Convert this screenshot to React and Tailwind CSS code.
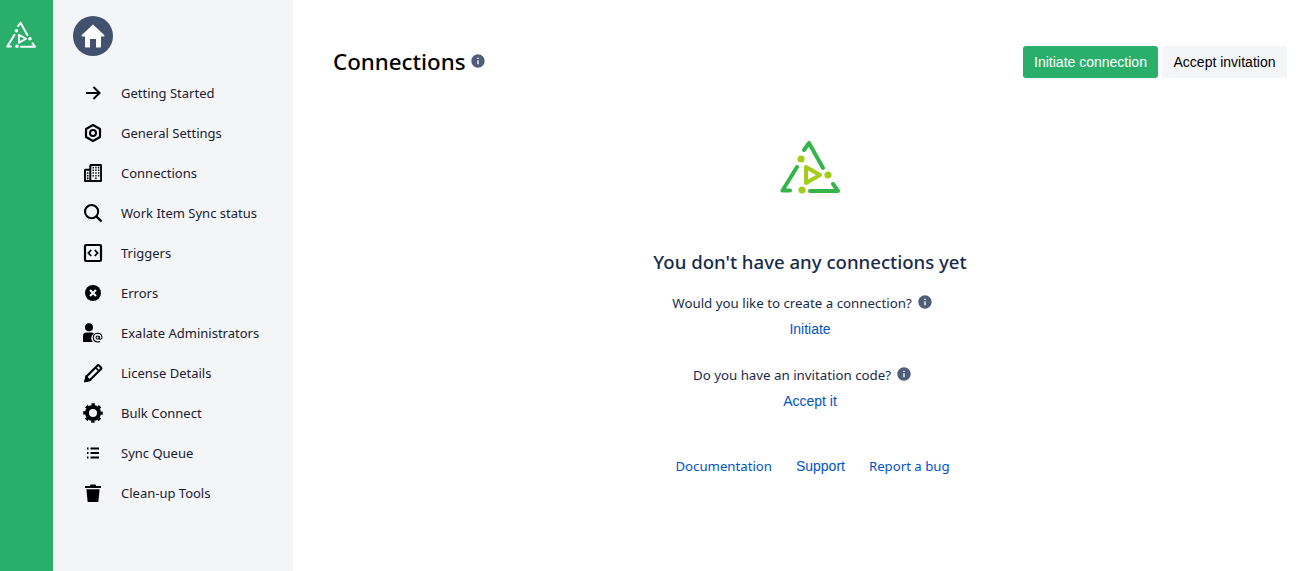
import { BiSolidInfoCircle } from "react-icons/bi";

const uiFont = "font-['Noto_Sans','Open_Sans',sans-serif]";
const linkFont = "font-['Liberation_Sans',Arial,sans-serif]";

// Exalate mark: dashed triangle with a play glyph inside
const Logo = ({ outer, inner, className }) => (
  <svg viewBox="0 0 60 55" fill="none" className={className}>
    <g stroke={outer} strokeWidth="4" strokeLinecap="round" strokeLinejoin="round">
      <path d="M24 10 L29 3 L43 28" />
      <path d="M17 27 L2.5 50.5 L10 50.5" />
      <path d="M30 51 L58 51 L53 44" />
    </g>
    <path d="M26 27 L40 35 L26 43 Z" stroke={inner} strokeWidth="4" strokeLinejoin="round" />
    <circle cx="21" cy="19" r="3.6" fill={inner} />
    <circle cx="48" cy="35" r="3.6" fill={inner} />
    <circle cx="22" cy="50" r="3.6" fill={inner} />
  </svg>
);

const Icon = ({ children, size = "w-5 h-5", ...rest }) => (
  <svg viewBox="0 0 20 20" className={size} fill="none" stroke="currentColor" {...rest}>
    {children}
  </svg>
);

const ArrowIcon = () => (
  <Icon>
    <path d="M3 10 H16 M10.5 4 L16.5 10 L10.5 16" strokeWidth="2" />
  </Icon>
);

const HexNut = () => (
  <Icon>
    <path d="M10 2 L17 6 V14 L10 18 L3 14 V6 Z" strokeWidth="2.2" strokeLinejoin="round" />
    <circle cx="10" cy="10" r="3" strokeWidth="2" />
  </Icon>
);

const BuildingsIcon = () => (
  <Icon size="w-[18px] h-[18px]">
    <path d="M7 18.5 V2 Q7 1 8 1 H18 Q19 1 19 2 V18 Q19 19 18 19 H2 Q1 19 1 18 V7.5 Q1 6.5 2 6.5 H7" strokeWidth="2.2" />
    <path d="M9.5 4 H11 M12.5 4 H14 M15.5 4 H17 M9.5 7 H11 M12.5 7 H14 M15.5 7 H17 M9.5 10 H11 M12.5 10 H14 M15.5 10 H17 M9.5 13 H11 M12.5 13 H14 M15.5 13 H17 M12.5 16 H14 M3.2 10 H5 M3.2 13 H5 M3.2 16 H5" strokeWidth="1.8" />
  </Icon>
);

const SearchIcon = () => (
  <Icon>
    <circle cx="8.6" cy="8.6" r="6.6" strokeWidth="2.1" />
    <path d="M13.4 13.4 L18.5 18.5" strokeWidth="2.3" />
  </Icon>
);

const CodeIcon = () => (
  <Icon>
    <rect x="2" y="2" width="16" height="16" rx="1" strokeWidth="2.2" />
    <path d="M8.2 7 L5.4 10 L8.2 13 M11.8 7 L14.6 10 L11.8 13" strokeWidth="1.8" />
  </Icon>
);

const ErrorIcon = () => (
  <Icon>
    <circle cx="10" cy="10" r="8" fill="currentColor" stroke="none" />
    <path d="M7 7 L13 13 M13 7 L7 13" stroke="#f4f5f7" strokeWidth="2.2" />
  </Icon>
);

const AdminIcon = () => (
  <Icon>
    <circle cx="6" cy="4.3" r="4" fill="currentColor" stroke="none" />
    <path d="M0 19 V13 Q0 9.6 3.5 9.6 H8 Q10 9.6 11 10.4 Q8.2 12 8.2 15 Q8.2 17.5 9.8 19 Z" fill="currentColor" stroke="none" />
    <circle cx="14.6" cy="14.6" r="1.6" strokeWidth="1.1" />
    <path d="M16.2 13 V15.2 Q16.3 16.4 17.5 16.2 Q19 15.8 19 14.2 Q18.8 10.4 14.7 10.2 Q10.4 10.4 10.3 14.6 Q10.5 18.8 14.7 19 Q16 19 17 18.5" strokeWidth="1.1" />
  </Icon>
);

const PencilIcon = () => (
  <Icon>
    <path d="M14.5 2.5 Q15.3 1.8 16 2.5 L18 4.5 Q18.7 5.2 18 6 L7 17 L2.5 18 L3.5 13.5 Z" strokeWidth="2.1" strokeLinejoin="round" />
    <path d="M12.5 4.5 L16 8 M2 18.5 L3.2 13.6 L6.8 17.3 Z" strokeWidth="1.6" fill="currentColor" />
  </Icon>
);

const GearIcon = () => (
  <Icon>
    <circle cx="10" cy="10" r="6" strokeWidth="4" />
    <circle cx="10" cy="10" r="8.6" strokeWidth="2.4" strokeDasharray="3.4 3.35" strokeDashoffset="1.7" />
  </Icon>
);

const ListIcon = () => (
  <Icon>
    <path d="M7.5 5.5 H16 M7.5 10 H16 M7.5 14.5 H16" strokeWidth="2" />
    <path d="M4 5.5 H5.5 M4 10 H5.5 M4 14.5 H5.5" strokeWidth="2.2" />
  </Icon>
);

const TrashIcon = () => (
  <Icon fill="currentColor" stroke="none">
    <path d="M7.5 1.5 H12.5 L13.2 3 H18 V5 H2 V3 H6.8 Z" />
    <path d="M3.4 6.2 H16.6 L15.4 18.4 Q15.3 19 14.6 19 H5.4 Q4.7 19 4.6 18.4 Z" />
  </Icon>
);

const NAV_ITEMS = [
  { label: "Getting Started", icon: <ArrowIcon /> },
  { label: "General Settings", icon: <HexNut /> },
  { label: "Connections", icon: <BuildingsIcon /> },
  { label: "Work Item Sync status", icon: <SearchIcon /> },
  { label: "Triggers", icon: <CodeIcon /> },
  { label: "Errors", icon: <ErrorIcon /> },
  { label: "Exalate Administrators", icon: <AdminIcon /> },
  { label: "License Details", icon: <PencilIcon /> },
  { label: "Bulk Connect", icon: <GearIcon /> },
  { label: "Sync Queue", icon: <ListIcon /> },
  { label: "Clean-up Tools", icon: <TrashIcon /> },
];

const Info = ({ className = "" }) => (
  <BiSolidInfoCircle className={`w-4 h-4 text-[#505f79] ${className}`} />
);

const Sidebar = () => (
  <aside className="w-[240px] shrink-0 bg-[#f4f5f7] pt-4 pl-5">
    <div className="w-10 h-10 rounded-full bg-[#42526e] flex items-center justify-center">
      <svg viewBox="0 0 24 24" className="w-6 h-6" fill="#fff">
        <path d="M12 0.5 L23.2 11 Q24 12.5 22.5 12.5 H20 V22.5 Q20 23.5 19 23.5 H15 V15 H9 V23.5 H5 Q4 23.5 4 22.5 V12.5 H1.5 Q0 12.5 0.8 11 Z" />
      </svg>
    </div>
    <nav className="mt-[17px]">
      {NAV_ITEMS.map((item) => (
        <a key={item.label} className="flex items-center h-10 text-[13px] text-[#172033]">
          <span className="w-10 flex items-center justify-center text-black">{item.icon}</span>
          <span className="ml-2 pt-[2px]">{item.label}</span>
        </a>
      ))}
    </nav>
  </aside>
);

const App = () => (
  <div className={`flex h-[571px] overflow-hidden bg-white ${uiFont}`}>
    <div className="w-[53px] shrink-0 bg-[#2aaf6a] pt-[21px] pl-[6px]">
      <Logo outer="#fff" inner="#fff" className="w-[30px] h-[28px]" />
    </div>
    <Sidebar />

    <main className="flex-1 pl-10 pr-[23px] pt-[46px]">
      <div className="flex items-start justify-between">
        <div className="flex items-center h-8">
          <h1 className="text-[22.3px] font-medium text-black leading-8 -mt-[1px]">Connections</h1>
          <Info className="ml-[4px] -mt-[2px]" />
        </div>
        <div className={`flex gap-1 text-[14px] ${linkFont}`}>
          <button className="h-8 w-[135px] rounded-[3px] bg-[#2aaf6a] text-white">Initiate connection</button>
          <button className="h-8 w-[125px] rounded-[3px] bg-[#f4f5f7] text-black">Accept invitation</button>
        </div>
      </div>

      <section className="flex flex-col items-center mt-[62px]">
        <Logo outer="#36b449" inner="#a4cd1b" className="w-[60px] h-[55px]" />
        <h2 className="mt-[53px] text-[18.6px] font-medium leading-7 text-[#172b4d]">You don't have any connections yet</h2>

        <div className="mt-[18px] pr-[15px] flex items-center h-5 text-[13.3px] text-[#172b4d]">
          <span>Would you like to create a connection?</span>
          <Info className="ml-[5px] -mt-[4px]" />
        </div>
        <a className={`mt-[5px] text-[14px] leading-5 text-[#0052cc] ${linkFont}`}>Initiate</a>

        <div className="mt-[27px] pr-[15px] flex items-center h-5 text-[13.3px] text-[#172b4d]">
          <span>Do you have an invitation code?</span>
          <Info className="ml-[5px] -mt-[4px]" />
        </div>
        <a className={`mt-[5px] text-[14px] leading-5 text-[#0052cc] ${linkFont}`}>Accept it</a>

        <div className="mt-[45px] ml-[5px] flex gap-6 text-[13.2px] leading-5 text-[#0052cc]">
          <a>Documentation</a>
          <a className={`text-[14px] ${linkFont}`}>Support</a>
          <a>Report a bug</a>
        </div>
      </section>
    </main>
  </div>
);

export default App;
